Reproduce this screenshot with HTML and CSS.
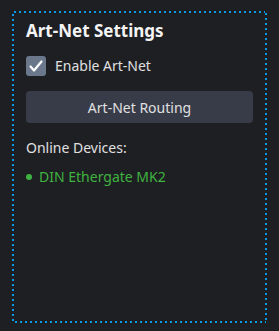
FILE: index.html
```html
<!DOCTYPE html>
<html lang="en">
<head>
  <meta charset="UTF-8">
  <title>Art-Net Settings</title>
  <link rel="stylesheet" href="styles.css">
</head>
<body>
  <div class="panel">
    <h2 class="title">Art-Net Settings</h2>

    <label class="check">
      <span class="box">
        <svg width="16" height="14" viewBox="0 0 16 14">
          <path d="M2.5 7.5 L6 11.5 L13.5 2.5" fill="none" stroke="#fff" stroke-width="2.2" stroke-linecap="round" stroke-linejoin="round"/>
        </svg>
      </span>
      Enable Art-Net
    </label>

    <button class="routing">Art-Net Routing</button>

    <div class="devices">
      <div class="heading">Online Devices:</div>
      <div class="device"><span class="dot"></span>DIN Ethergate MK2</div>
    </div>
  </div>
</body>
</html>
```

FILE: styles.css
```css
*{
  margin:0;
  padding:0;
  box-sizing: border-box;
}
html, body {
  height: 100%;
}
body {
  background: #1e1f23;
  font-family: 'Noto Sans', sans-serif;
  font-size: 14px;
  color: #e0e0e0;
  padding: 11px 12px 8px 12px;
}
.panel {
  height: 312px;
  padding: 10px 14px;
  display: flex;
  flex-direction: column;
  background:
    repeating-linear-gradient(90deg, #0a9ae6 0 2px, transparent 2px 5px) 2px 0 / calc(100% - 4px) 2px no-repeat,
    repeating-linear-gradient(90deg, #0a9ae6 0 2px, transparent 2px 5px) 3px 100% / calc(100% - 4px) 2px no-repeat,
    repeating-linear-gradient(180deg, #0a9ae6 0 2px, transparent 2px 5px) 0 3px / 2px calc(100% - 4px) no-repeat,
    repeating-linear-gradient(180deg, #0a9ae6 0 2px, transparent 2px 5px) 100% 2px / 2px calc(100% - 4px) no-repeat;
}
.title {
  font-size: 17px;
  font-weight: 700;
  color: #f4f4f4;
  line-height: 20px;
}
.check {
  display: flex;
  align-items: center;
  gap: 9px;
  margin-top: 15px;
  line-height: 20px;
}
.box {
  width: 20px;
  height: 20px;
  border-radius: 3px;
  background: #6b788c;
  display: flex;
  align-items: center;
  justify-content: center;
}
.routing {
  margin-top: 15px;
  height: 32px;
  border: none;
  border-radius: 4px;
  background: #383c49;
  color: #e0e0e0;
  font-family: inherit;
  font-size: 14px;
}
.devices {
  margin-top: 15px;
  display: flex;
  flex-direction: column;
  gap: 9px;
  line-height: 20px;
}
.device {
  color: #3fb33f;
  display: flex;
  align-items: center;
}
.dot {
  width: 6px;
  height: 6px;
  border-radius: 50%;
  background: #3fb33f;
  margin-right: 7px;
}
```
